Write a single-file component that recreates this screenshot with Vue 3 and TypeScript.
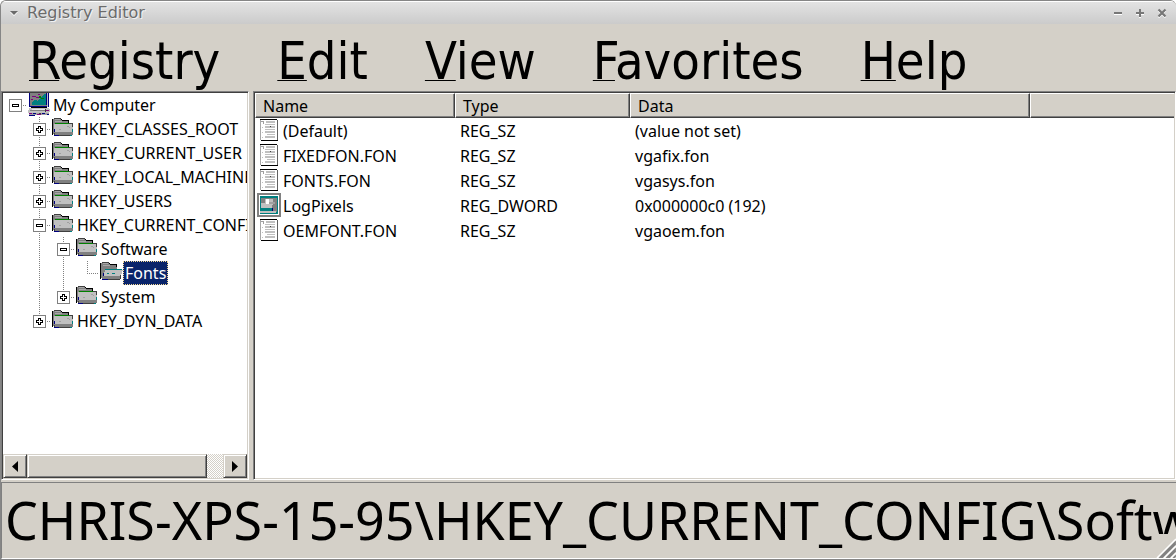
<script setup lang="ts">
type Guide = 'none' | 'line' | 'tee' | 'end'

interface TreeRow {
  label: string
  guides: Guide[]
  state: 'open' | 'closed' | 'leaf'
  icon: 'computer' | 'folder' | 'folder-open'
  selected?: boolean
}

interface ValueRow {
  name: string
  type: string
  data: string
  binary?: boolean
}

const menus = ['Registry', 'Edit', 'View', 'Favorites', 'Help']

const tree: TreeRow[] = [
  { label: 'My Computer', guides: ['none'], state: 'open', icon: 'computer' },
  { label: 'HKEY_CLASSES_ROOT', guides: ['none', 'tee'], state: 'closed', icon: 'folder' },
  { label: 'HKEY_CURRENT_USER', guides: ['none', 'tee'], state: 'closed', icon: 'folder' },
  { label: 'HKEY_LOCAL_MACHINE', guides: ['none', 'tee'], state: 'closed', icon: 'folder' },
  { label: 'HKEY_USERS', guides: ['none', 'tee'], state: 'closed', icon: 'folder' },
  { label: 'HKEY_CURRENT_CONFIG', guides: ['none', 'tee'], state: 'open', icon: 'folder' },
  { label: 'Software', guides: ['none', 'line', 'tee'], state: 'open', icon: 'folder' },
  { label: 'Fonts', guides: ['none', 'line', 'line', 'end'], state: 'leaf', icon: 'folder-open', selected: true },
  { label: 'System', guides: ['none', 'line', 'end'], state: 'closed', icon: 'folder' },
  { label: 'HKEY_DYN_DATA', guides: ['none', 'end'], state: 'closed', icon: 'folder' },
]

const values: ValueRow[] = [
  { name: '(Default)', type: 'REG_SZ', data: '(value not set)' },
  { name: 'FIXEDFON.FON', type: 'REG_SZ', data: 'vgafix.fon' },
  { name: 'FONTS.FON', type: 'REG_SZ', data: 'vgasys.fon' },
  { name: 'LogPixels', type: 'REG_DWORD', data: '0x000000c0 (192)', binary: true },
  { name: 'OEMFONT.FON', type: 'REG_SZ', data: 'vgaoem.fon' },
]

const path = 'CHRIS-XPS-15-95\\HKEY_CURRENT_CONFIG\\Software\\Fonts'
</script>

<template>
  <div class="window">
    <header class="titlebar">
      <button class="wm" type="button" aria-label="Window menu">
        <svg width="10" height="10" viewBox="0 0 10 10"><path d="M1 4h8L5 8z" fill="#fff" /><path d="M1 3h8L5 7z" fill="#6b6b6b" /></svg>
      </button>
      <h1 class="title">Registry Editor</h1>
      <button class="wm" type="button" aria-label="Minimize">
        <svg width="10" height="10" viewBox="0 0 10 10"><path d="M1 6h8" stroke="#fff" stroke-width="2" /><path d="M1 5h8" stroke="#777" stroke-width="2" /></svg>
      </button>
      <button class="wm" type="button" aria-label="Maximize">
        <svg width="10" height="10" viewBox="0 0 10 10"><path d="M1 6h8M5 2v8" stroke="#fff" stroke-width="2" /><path d="M1 5h8M5 1v8" stroke="#777" stroke-width="2" /></svg>
      </button>
      <button class="wm" type="button" aria-label="Close">
        <svg width="10" height="10" viewBox="0 0 10 10"><path d="M1.5 2.5l7 7M8.5 2.5l-7 7" stroke="#fff" stroke-width="2" /><path d="M1.5 1.5l7 7M8.5 1.5l-7 7" stroke="#777" stroke-width="2.2" /></svg>
      </button>
    </header>

    <nav class="menubar">
      <button v-for="m in menus" :key="m" type="button" class="menu"><span class="key">{{ m[0] }}</span>{{ m.slice(1) }}</button>
    </nav>

    <main class="panes">
      <section class="pane tree-pane" aria-label="Keys">
        <ul class="tree" role="tree">
          <li v-for="row in tree" :key="row.label" class="node" role="treeitem" :aria-selected="!!row.selected">
            <template v-for="(g, i) in row.guides" :key="i">
              <component
                :is="i === row.guides.length - 1 && row.state !== 'leaf' ? 'button' : 'span'"
                class="cell"
                :aria-label="i === row.guides.length - 1 && row.state !== 'leaf' ? 'Toggle ' + row.label : undefined"
              >
                <svg width="24" height="24" viewBox="0 0 24 24" shape-rendering="crispEdges" fill="none">
                  <path v-if="g === 'line' || g === 'tee'" d="M12.500 0v24" class="dots" />
                  <path v-if="g === 'end'" d="M12.500 0v12" class="dots" />
                  <path v-if="i === row.guides.length - 1" d="M12 12.500h12" class="dots" />
                  <g v-if="i === row.guides.length - 1 && row.state !== 'leaf'">
                    <path d="M6.500 6.500h12v12h-12z" fill="#fff" stroke="#808080" />
                    <path v-if="row.state === 'open'" d="M9.500 11.500h6v2h-6z" stroke="#000" />
                    <path v-else d="M11.500 9.500h2v2h2v2h-2v2h-2v-2h-2v-2h2z" stroke="#000" />
                  </g>
                </svg>
              </component>
            </template>

            <svg v-if="row.icon === 'computer'" class="icon" width="24" height="24" viewBox="0 0 24 24" shape-rendering="crispEdges">
              <path d="M2 0h1v14H2z" fill="#000080" />
              <path d="M3 0h17v13H3z" fill="#808080" />
              <path d="M20 0h1v14h-1z" fill="#c0c0c0" />
              <path d="M21 0h1v14h-1zM19 0h1v12h-1z" fill="#000080" />
              <path d="M5 12V9l3-2 3 1 4-5 2-2h2v11z" fill="#008080" />
              <path d="M5 3h4v1H5zM11 1h2v1h-2zM4 6h2v1H4zM9 4h3v1H9z" fill="#800080" />
              <path d="M14 5h3v1h-3zM12 3h2v2h-2z" fill="#008000" />
              <path d="M3 13h17v1H3z" fill="#000080" />
              <path d="M2 15h20v1h1v3h-1v1H1v-3h1z" fill="#c0c0c0" />
              <path d="M4 14h16v1H4z" fill="#000" />
              <path d="M3 17h15v1H3z" fill="#808080" />
              <path d="M5 16h13v1H5z" fill="#e8e8e8" />
              <path d="M2 20h20v2H2z" fill="#a0a0a0" />
              <path d="M2 20h3v1H2zM10 21h4v1h-4zM19 17h3v1h-3z" fill="#800080" />
              <path d="M6 20h3v1H6zM15 20h3v1h-3zM20 21h2v1h-2zM2 22h6v1H2z" fill="#000080" />
              <path d="M18 16h1v3h-1zM12 20h2v1h-2z" fill="#404040" />
            </svg>

            <svg v-else class="icon" width="24" height="24" viewBox="0 0 24 24" shape-rendering="crispEdges">
              <path d="M2 2h1V1h7v1h1v2h7v13H2z" fill="#808080" />
              <path d="M1 2h1v16H1zM10 2h1v1h-1zM11 3h7v1h-7zM17 3h1v3h-1z" fill="#000" />
              <path d="M3 1h7v1H3z" fill="#404040" />
              <path d="M4 2h5v1H4zM4 4h7v1H4z" fill="#a8a8a8" />
              <template v-if="row.icon === 'folder'">
                <path d="M3 7h10V6h9v12H3z" fill="#c0c0c0" />
                <path d="M3 15h19v3H3z" fill="#808080" />
                <path d="M4 6h14v1H4z" fill="#008000" />
                <path d="M18 6h4v1h-4zM21 6h1v4h-1z" fill="#404040" />
                <path d="M3 12h1v3H3zM3 18h5v1H3z" fill="#000080" />
                <path d="M21 12h1v3h-1zM19 18h2v1h-2z" fill="#008080" />
                <path d="M16 9h2v1h-2zM18 10h1v1h-1zM8 12h2v1H8z" fill="#a0a0a0" />
                <path d="M3 16h1v2H3zM8 18h11v1H8z" fill="#404040" />
              </template>
              <template v-else>
                <path d="M6 9h18l-3 8H4z" fill="#c0c0c0" />
                <path d="M3 15h18v3H3z" fill="#808080" />
                <path d="M6 8h17v1H6zM8 12h2v1H8zM13 12h3v1h-3z" fill="#008080" />
                <path d="M4 12h1v3H4zM3 18h6v1H3z" fill="#000080" />
                <path d="M9 18h12v1H9zM21 14h1v4h-1z" fill="#404040" />
              </template>
            </svg>
            <span class="label" :class="{ selected: row.selected }">{{ row.label }}</span>
          </li>
        </ul>

        <div class="scrollbar">
          <button class="raised arrow" type="button" aria-label="Scroll left">
            <svg width="6" height="11" viewBox="0 0 6 11"><path d="M6 0v11L0 5.500z" /></svg>
          </button>
          <div class="track"><div class="raised thumb"></div></div>
          <button class="raised arrow" type="button" aria-label="Scroll right">
            <svg width="6" height="11" viewBox="0 0 6 11"><path d="M0 0v11l6-5.500z" /></svg>
          </button>
        </div>
      </section>

      <section class="pane list-pane" aria-label="Values">
        <table class="list">
          <colgroup>
            <col class="c-name" /><col class="c-type" /><col class="c-data" /><col />
          </colgroup>
          <thead>
            <tr><th>Name</th><th>Type</th><th>Data</th><th aria-hidden="true"></th></tr>
          </thead>
          <tbody>
            <tr v-for="v in values" :key="v.name">
              <td>
                <div class="name">
                  <svg v-if="v.binary" width="26" height="25" viewBox="0 0 26 25" shape-rendering="crispEdges">
                    <path d="M2 0h24v24H2z" fill="#808080" />
                    <path d="M3 1h22v22H3z" fill="#fff" />
                    <path d="M2 0h24v24H2zM4 2v20h20V2z" fill="#808080" fill-rule="evenodd" />
                    <path d="M5 3h18v18H5z" fill="#008080" />
                    <path d="M6 5h16v10H6z" fill="#808080" />
                    <path d="M6 10h12v5H6zM10 6h8v5h-8z" fill="#c0c0c0" />
                    <path d="M11 6h3v5h-3z" fill="#fff" />
                    <path d="M14 9h6v2h-6z" fill="#a0a0a0" />
                    <path d="M17 12h5v7h-5z" fill="#808080" />
                    <path d="M5 18h16v2H5z" fill="#c0c0c0" />
                    <path d="M17 15h1v3h-1z" fill="#000080" />
                  </svg>
                  <svg v-else width="26" height="25" viewBox="0 0 26 25" shape-rendering="crispEdges">
                    <path d="M5 2h18v20H5z" fill="#fff" />
                    <path d="M5 1h17v1H5zM6 22h17v1H6z" fill="#000" />
                    <path d="M5 2h1v20H5z" fill="#a8a8a8" />
                    <path d="M22 2h1v20h-1z" fill="#606060" />
                    <path d="M6 3h3v1H6zM8 3h1v3H8z" fill="#a0a0a0" />
                    <path d="M11 3h9v2h-9zM10 6h10v1H10zM10 8h10v2H10zM10 11h10v1H10zM10 13h10v2H10zM12 16h8v1h-8zM10 18h10v2H10zM7 9h1v1H7zM7 14h1v1H7zM7 19h1v1H7z" fill="#c0c0c0" />
                    <path d="M15 8h1v1h-1z" fill="#404040" />
                  </svg>
                  <span class="text">{{ v.name }}</span>
                </div>
              </td>
              <td class="text">{{ v.type }}</td>
              <td class="text">{{ v.data }}</td>
              <td></td>
            </tr>
          </tbody>
        </table>
      </section>
    </main>

    <footer class="status">
      <span class="path">{{ path }}</span>
      <svg class="grip" width="24" height="24" viewBox="0 0 24 24">
        <path d="M5 24L24 5M12 24L24 12M19 24l5-5" stroke="#fff" stroke-width="1.500" />
        <path d="M7.500 24L24 7.500M9.500 24L24 9.500M14.500 24l9.500-9.500M16.500 24l7.500-7.500M21.500 24l2.500-2.500" stroke="#808080" stroke-width="1.500" />
      </svg>
    </footer>
  </div>
</template>

<style>
body {
  margin: 0;
  overflow: hidden;
}
</style>

<style scoped>
.window {
  box-sizing: border-box;
  display: flex;
  flex-direction: column;
  height: 100vh;
  border: 1px solid #868686;
  border-right: 0;
  border-radius: 6px 6px 0 0;
  overflow: hidden;
  background: #d4d0c8;
  color: #000;
  font: 16px/24px "Noto Sans", "DejaVu Sans Condensed", sans-serif;
}
button {
  margin: 0;
  padding: 0;
  border: 0;
  background: none;
  color: inherit;
  font: inherit;
}
.titlebar {
  display: flex;
  flex: none;
  align-items: center;
  height: 22px;
  padding: 0 9px 0 8px;
  border-top: 1px solid #fff;
  background: linear-gradient(#e3e3e3, #cbcbcb);
}
.title {
  flex: 1;
  margin: 0 0 0 8px;
  color: #6b6b6b;
  font: 16px/24px "DejaVu Sans", sans-serif;
  text-shadow: 1px 1px 0 #f2f2f2;
}
.wm {
  display: flex;
  margin-left: 12px;
}
.wm:first-child {
  margin-left: 0;
}
.menubar {
  box-sizing: border-box;
  display: flex;
  flex: none;
  gap: 1px;
  height: 67px;
  padding-top: 6px;
  align-items: center;
}
.menu {
  padding: 0 28px;
  font-family: "DejaVu Sans Condensed", "DejaVu Sans", sans-serif;
  font-size: 52px;
  line-height: 60px;
  white-space: nowrap;
}
.key {
  text-decoration: underline;
  text-decoration-thickness: 1px;
  text-underline-offset: 1px;
  text-decoration-skip-ink: none;
}
.panes {
  display: flex;
  flex: 1;
  min-height: 0;
  gap: 4px;
}
.pane {
  box-sizing: border-box;
  border: 1px solid;
  border-color: #808080 #fff #fff #808080;
  background: #fff;
  box-shadow: inset 1px 1px #404040, inset -1px -1px #d4d0c8;
  padding: 1px;
  overflow: hidden;
}
.tree-pane {
  display: flex;
  flex: 0 0 248px;
  flex-direction: column;
}
.list-pane {
  flex: 1;
  min-width: 0;
}
.tree {
  flex: 1;
  min-height: 0;
  margin: 0;
  padding: 0;
  list-style: none;
  overflow: hidden;
}
.node {
  display: flex;
  height: 24px;
  white-space: nowrap;
}
.cell,
.cell svg,
.icon {
  display: block;
  flex: none;
}
.dots {
  stroke: #808080;
  stroke-dasharray: 1 1;
}
.label {
  box-sizing: border-box;
  height: 24px;
  padding: 0 2px;
}
.selected {
  background: #0a246a;
  color: #fff;
  outline: 1px dotted #f5db95;
  outline-offset: -1px;
}
.scrollbar {
  display: flex;
  flex: none;
  height: 24px;
}
.raised {
  box-sizing: border-box;
  border: 1px solid;
  border-color: #d4d0c8 #404040 #404040 #d4d0c8;
  background: #d4d0c8;
  box-shadow: inset 1px 1px #fff, inset -1px -1px #808080;
}
.arrow {
  display: flex;
  flex: 0 0 24px;
  align-items: center;
  justify-content: center;
}
.track {
  flex: 1;
  background: repeating-conic-gradient(#d4d0c8 0 25%, #fff 0 50%) 0 0 / 2px 2px;
}
.thumb {
  width: 92%;
  height: 100%;
}
.list {
  width: 100%;
  border-collapse: separate;
  border-spacing: 0;
  table-layout: fixed;
}
.c-name {
  width: 200px;
}
.c-type {
  width: 175px;
}
.c-data {
  width: 400px;
}
th {
  box-sizing: border-box;
  height: 25px;
  padding: 2px 7px 0;
  border: 1px solid;
  border-color: #fff #404040 #404040 #fff;
  background: #d4d0c8;
  box-shadow: inset -1px -1px #808080;
  font-weight: normal;
  line-height: 21px;
  text-align: left;
}
th:last-child {
  border-right: 0;
  box-shadow: inset 0 -1px #808080;
}
td {
  box-sizing: border-box;
  height: 25px;
  padding: 0;
  white-space: nowrap;
}
.text {
  padding-top: 2px;
  line-height: 23px;
}
td.text {
  padding-left: 5px;
}
.name {
  display: flex;
  gap: 2px;
}
.status {
  position: relative;
  flex: none;
  height: 75px;
  margin-top: 2px;
  border-top: 1px solid #808080;
  border-left: 1px solid #808080;
  border-bottom: 1px solid #fff;
  overflow: hidden;
}
.path {
  display: block;
  padding-left: 3px;
  font-size: 52px;
  line-height: 74px;
  white-space: nowrap;
}
.grip {
  position: absolute;
  right: 0;
  bottom: 0;
  background: #d4d0c8;
}
</style>
